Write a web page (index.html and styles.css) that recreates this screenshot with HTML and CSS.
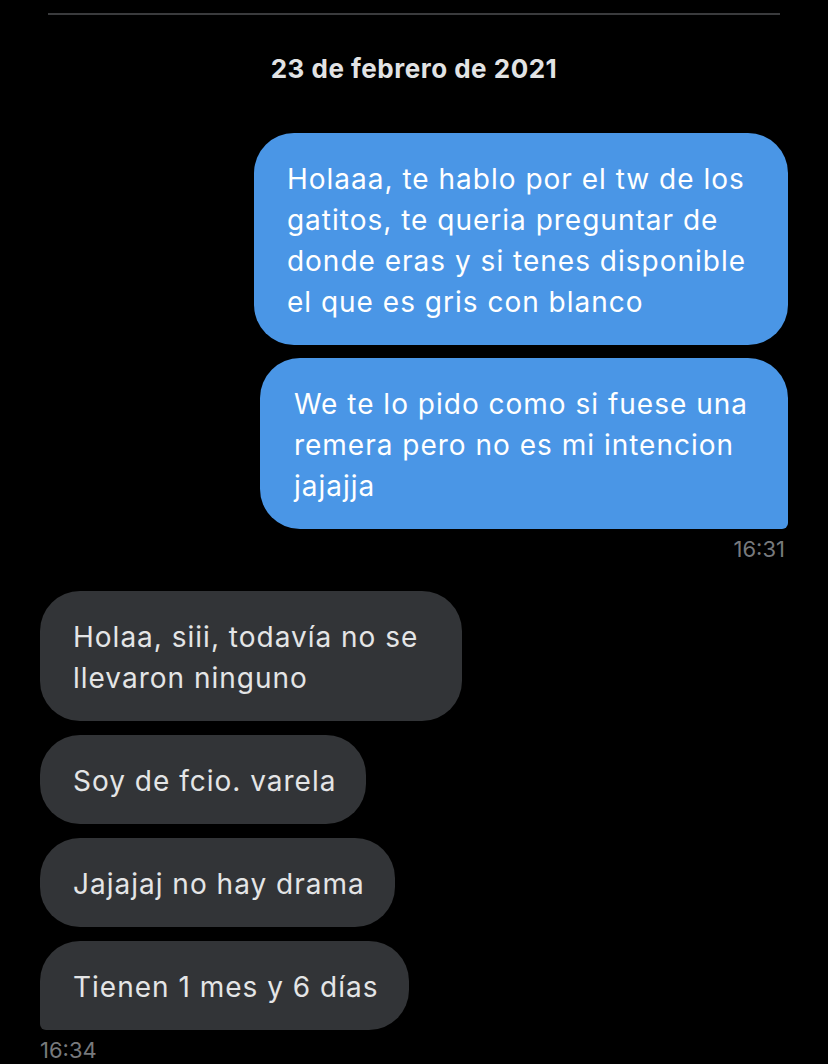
FILE: index.html
```html
<!DOCTYPE html>
<html lang="es">
<head>
<meta charset="utf-8">
<title>Mensajes</title>
<link rel="stylesheet" href="styles.css">
</head>
<body>
<main class="chat">
  <div class="divider"></div>
  <div class="date">23 de febrero de 2021</div>

  <section class="group group-out">
    <div class="bubble bubble-out multi">Holaaa, te hablo por el tw de los<br>gatitos, te queria preguntar de<br>donde eras y si tenes disponible<br>el que es gris con blanco</div>
    <div class="bubble bubble-out multi last-out">We te lo pido como si fuese una<br>remera pero no es mi intencion<br>jajajja</div>
    <div class="time time-out">16:31</div>
  </section>

  <section class="group group-in">
    <div class="bubble bubble-in multi">Holaa, siii, todavía no se<br>llevaron ninguno</div>
    <div class="bubble bubble-in">Soy de fcio. varela</div>
    <div class="bubble bubble-in">Jajajaj no hay drama</div>
    <div class="bubble bubble-in last-in">Tienen 1 mes y 6 días</div>
    <div class="time time-in">16:34</div>
  </section>
</main>
</body>
</html>
```

FILE: styles.css
```css
html, body {
  margin: 0;
  padding: 0;
  background: #000;
}

body {
  width: 828px;
  height: 1064px;
  overflow: hidden;
  font-family: Inter, "Liberation Sans", Arial, sans-serif;
  -webkit-font-smoothing: antialiased;
}

.chat {
  padding: 0 40px;
  display: flex;
  flex-direction: column;
}

.divider {
  margin: 13px 8px 0;
  height: 2px;
  background: #3a3b3d;
}

.date {
  margin-top: 38px;
  line-height: 32px;
  font-size: 26px;
  font-weight: 700;
  letter-spacing: 0.5px;
  color: #e2e3e4;
  text-align: center;
}

.group {
  display: flex;
  flex-direction: column;
  gap: 13px;
}

.group-out {
  margin-top: 48px;
  align-items: flex-end;
}

.group-in {
  margin-top: 28px;
  align-items: flex-start;
  gap: 14px;
}

.bubble {
  font-size: 28px;
  line-height: 41px;
  letter-spacing: 1px;
  padding: 26px 30px 22px 33px;
  border-radius: 40px;
  white-space: nowrap;
}

.bubble.multi {
  padding-right: 42px;
}

.bubble-out {
  background: #4a96e6;
  color: #fff;
}

.bubble-out.last-out {
  padding-left: 34px;
  padding-right: 40px;
}

.bubble-in {
  background: #323437;
  color: #e4e5e6;
}

.bubble-in.multi {
  padding-right: 44px;
}

.last-out {
  border-bottom-right-radius: 6px;
}

.last-in {
  border-bottom-left-radius: 6px;
}

.time {
  font-size: 22px;
  line-height: 28px;
  color: #77797c;
}

.time-out {
  margin-top: -7px;
  padding-right: 3px;
}

.time-in {
  margin-top: -8px;
}
```
